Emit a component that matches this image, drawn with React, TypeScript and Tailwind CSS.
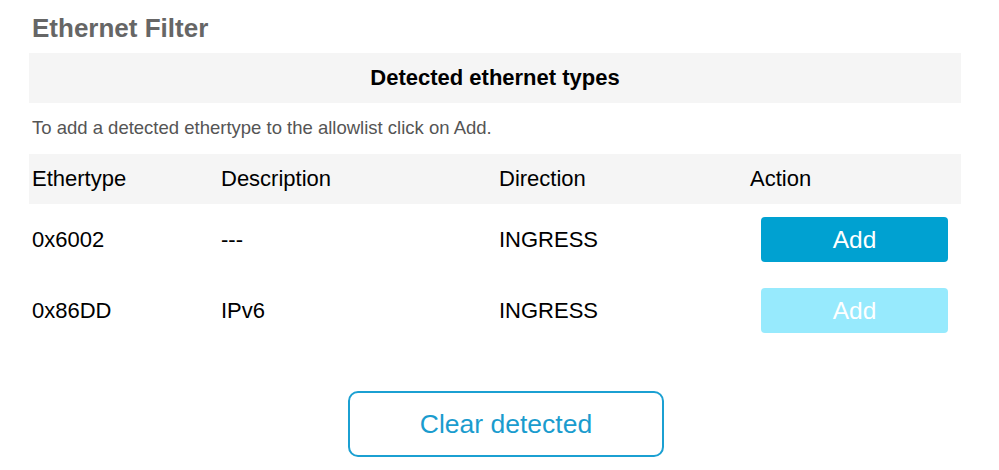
import React from "react";

const rows = [
  { type: "0x6002", desc: "---", dir: "INGRESS", enabled: true },
  { type: "0x86DD", desc: "IPv6", dir: "INGRESS", enabled: false },
];

const cols = "grid grid-cols-[189px_278px_251px_1fr]";

const App = () => {
  return (
    <div className="min-h-[470px] w-[999px] bg-white font-['Liberation_Sans',Arial,sans-serif]">
      <div className="ml-[29px] w-[932px]">
        {/* title */}
        <h1 className="pl-[3px] pt-[13px] mb-[10px] text-[26px] leading-[30px] font-bold text-[#666666]">
          Ethernet Filter
        </h1>

        {/* section band */}
        <div className="flex h-[50px] items-center justify-center bg-[#f5f5f5]">
          <h2 className="text-[22px] leading-[26px] font-bold text-black">
            Detected ethernet types
          </h2>
        </div>

        <p className="h-[51px] pl-[3px] pt-[13px] text-[18.5px] leading-[24px] text-[#555555]">
          To add a detected ethertype to the allowlist click on Add.
        </p>

        {/* table header */}
        <div className={`${cols} h-[50px] items-center bg-[#f5f5f5] text-[22px] leading-[26px] text-black`}>
          <div className="pl-[3px]">Ethertype</div>
          <div className="pl-[3px]">Description</div>
          <div className="pl-[3px]">Direction</div>
          <div className="pl-[3px]">Action</div>
        </div>

        {rows.map((r) => (
          <div
            key={r.type}
            className={`${cols} h-[71px] items-center text-[22px] leading-[26px] text-black`}
          >
            <div className="pl-[3px]">{r.type}</div>
            <div className="pl-[3px]">{r.desc}</div>
            <div className="pl-[3px]">{r.dir}</div>
            <div className="pl-[14px]">
              <button
                disabled={!r.enabled}
                className={`flex h-[45px] w-[187px] items-center justify-center rounded-[4px] text-[24.5px] leading-[28px] text-white ${
                  r.enabled ? "bg-[#00a1d1]" : "bg-[#97eafd]"
                }`}
              >
                Add
              </button>
            </div>
          </div>
        ))}

        <div className="mt-[45px] pl-[319px]">
          <button className="flex h-[66px] w-[316px] items-center justify-center rounded-[10px] border-2 border-[#1ba0d2] bg-white text-[26.5px] leading-[30px] text-[#1a9cce]">
            Clear detected
          </button>
        </div>
      </div>
    </div>
  );
};

export default App;
